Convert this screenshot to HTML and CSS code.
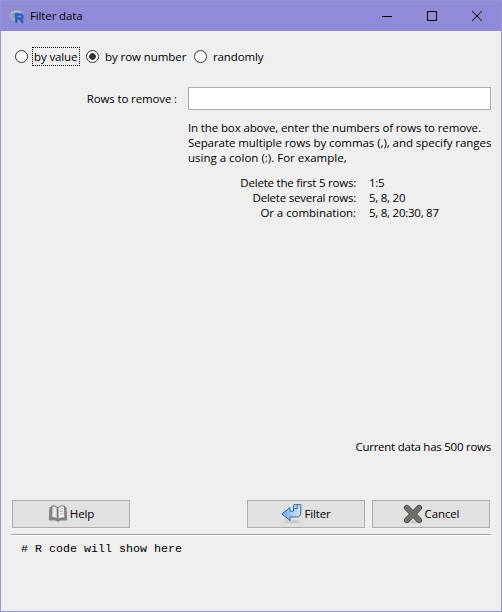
FILE: index.html
```html
<!DOCTYPE html>
<html lang="en">
<head>
<meta charset="utf-8">
<title>Filter data</title>
<link rel="stylesheet" href="styles.css">
</head>
<body>
<div class="window">
  <header class="titlebar">
    <svg class="logo" width="16" height="14" viewBox="0 0 16 14">
      <ellipse cx="7.7" cy="5.6" rx="6.3" ry="4.4" fill="none" stroke="#a5a8b4" stroke-width="2.6"/>
      <path d="M2 3.4Q7 -.4 12.5 3" fill="none" stroke="#c9cbd5" stroke-width="1"/>
      <path d="M7.3 12.7V4.4H11.2Q13.6 4.4 13.6 6.5T11.2 8.6H8M11 8.7L14 12.7" fill="none" stroke="#2464b8" stroke-width="2.5"/>
    </svg>
    <h1 class="title">Filter data</h1>
    <div class="controls">
      <svg width="10" height="10" viewBox="0 0 10 10"><path d="M0 5.5H10"/></svg>
      <svg width="10" height="10" viewBox="0 0 10 10"><path d="M.5 .5H9.5V9.5H.5Z"/></svg>
      <svg width="10" height="10" viewBox="0 0 10 10"><path d="M0 0L10 10M10 0L0 10"/></svg>
    </div>
  </header>
  <main class="content">
    <div class="radios">
      <span class="radio"></span><span class="label focused">by value</span>
      <span class="radio checked"></span><span class="label row-label">by row number</span>
      <span class="radio"></span><span class="label">randomly</span>
    </div>
    <div class="form">
      <label class="field-label" for="rows">Rows to remove :</label>
      <input class="field" id="rows" type="text">
      <div class="hint">
        <div>In the box above, enter the numbers of rows to remove.</div>
        <div class="hint-wide">Separate multiple rows by commas (,), and specify ranges</div>
        <div class="hint-last">using a colon (:). For example,</div>
      </div>
      <div class="examples">
        <span class="ex-name">Delete the first 5 rows:</span><span>1:5</span>
        <span class="ex-name">Delete several rows:</span><span>5, 8, 20</span>
        <span class="ex-name ex-last">Or a combination:</span><span>5, 8, 20:30, 87</span>
      </div>
    </div>
    <p class="status">Current data has 500 rows</p>
    <div class="buttons">
      <button class="button help">
        <svg width="20" height="20" viewBox="0 0 20 20">
          <path d="M2 3.5L1.2 16H8L10 17.5L12 16H18.8L18 3.5Z" fill="#858585" stroke="#858585"/>
          <path d="M3.5 2Q7 1 9.5 3.5V15.5Q7 13 3 14Z" fill="#c4c4c4" stroke="#777"/>
          <path d="M10 3.5Q13 1 16.5 2L17 14Q13 13 10 15.5Z" fill="#f3f3f3" stroke="#777"/>
          <path d="M6.5 3V13" stroke="#f8f8f8" stroke-width="2"/>
          <path d="M12 5.2L15 4.5M12 7.7L15 7M12 10.2L15.3 9.5" stroke="#aaa"/>
        </svg>
        <span>Help</span>
      </button>
      <button class="button filter">
        <svg width="21" height="20" viewBox="0 0 21 20">
          <defs><linearGradient id="blue" x2="1" y2="0"><stop stop-color="#6faae0"/><stop offset="1" stop-color="#d3e4f5"/></linearGradient></defs>
          <ellipse cx="11" cy="17.6" rx="8.5" ry="1.6" fill="#c9c9c9"/>
          <path d="M.8 10L9 3.5V7.2H12.5V1.5Q12.5 .6 13.5 .6H19.8V9Q19.8 13 15.5 13H9V16.5Z" fill="url(#blue)" stroke="#3269a5"/>
          <path d="M13 4.7H16.2V1" fill="none" stroke="#3269a5"/>
        </svg>
        <span>Filter</span>
      </button>
      <button class="button cancel">
        <svg width="20" height="20" viewBox="0 0 20 20">
          <ellipse cx="10" cy="17.8" rx="8" ry="1.4" fill="#c8c8c8"/>
          <g fill="none" stroke-linecap="round">
            <path d="M3.8 3.8L16.2 16.2M16.2 3.8L3.8 16.2" stroke="#464844" stroke-width="5.8"/>
            <path d="M3.8 3.8L16.2 16.2M16.2 3.8L3.8 16.2" stroke="#858783" stroke-width="4"/>
            <path d="M3.8 3.8L16.2 16.2M16.2 3.8L3.8 16.2" stroke="#6b6d69" stroke-width="2.6"/>
          </g>
        </svg>
        <span>Cancel</span>
      </button>
    </div>
    <div class="separator"></div>
    <code class="code"># R code will show here</code>
  </main>
</div>
</body>
</html>
```

FILE: styles.css
```css
* { box-sizing: border-box; }
body {
  margin: 0;
  font: 11.5px/15px "Open Sans", "Noto Sans", sans-serif;
  letter-spacing: -0.13px;
  color: #000;
}
.window {
  width: 502px;
  height: 612px;
  overflow: hidden;
  border: 1px solid #9793da;
  background: #efefef;
}
.titlebar {
  display: flex;
  align-items: center;
  height: 30px;
  padding: 0 19px 0 8px;
  background: #8f8bd8;
}
.logo { margin-top: 1px; }
.title {
  flex: 1;
  margin: -2px 0 0 5px;
  font-size: 11.5px;
  font-weight: 400;
}
.controls { display: flex; gap: 35px; margin-top: -1px; }
.controls svg { fill: none; stroke: #000; stroke-width: 1; }
.content { padding: 15px 10px 0 11px; }
.radios { display: flex; align-items: center; height: 20px; padding-left: 3px; }
.radio {
  width: 13px;
  height: 13px;
  margin-right: 6px;
  border: 1px solid #333;
  border-radius: 50%;
  background: #fff;
}
.radio.checked { background: radial-gradient(circle, #333 3px, #fff 3.7px); }
.label { white-space: nowrap; }
.focused {
  width: 48px;
  height: 19px;
  margin: 0 6px 0 -2px;
  padding: 1px;
  border: 1px dotted #000;
}
.row-label { width: 83px; margin-right: 6px; letter-spacing: -0.07px; }
.form {
  display: grid;
  grid-template-columns: 165px 303px;
  column-gap: 11px;
  margin-top: 21px;
}
.field-label { justify-self: end; align-self: center; letter-spacing: -0.13px; }
.field {
  width: 303px;
  height: 23px;
  padding: 0 4px;
  border: 1px solid #abadb3;
  background: #fff;
  font: inherit;
}
.hint { grid-column: 2; margin-top: 10px; white-space: nowrap; }
.hint-wide { letter-spacing: -0.06px; }
.hint-last { letter-spacing: 0; }
.examples {
  grid-column: 2;
  display: grid;
  grid-template-columns: 168px 1fr;
  column-gap: 13px;
  margin-top: 10px;
  letter-spacing: -0.25px;
}
.ex-name { text-align: right; letter-spacing: -0.22px; }
.ex-last { letter-spacing: -0.05px; }
.status { margin: 219px 0 0; text-align: right; letter-spacing: -0.25px; }
.buttons { display: flex; margin-top: 46px; padding-right: 1px; }
.button {
  display: flex;
  align-items: center;
  justify-content: center;
  gap: 2px;
  width: 118px;
  height: 28px;
  padding: 0;
  border: 1px solid #adadad;
  background: #e1e1e1;
  color: #000;
  font: inherit;
  letter-spacing: inherit;
}
.button span { margin-top: -2px; }
.filter { margin-left: auto; }
.cancel { margin-left: 7px; }
.separator {
  height: 2px;
  margin: 6px 0 0 -1px;
  border-top: 1px solid #a0a0a0;
  background: #fff;
}
.code {
  display: block;
  margin: 6px 0 0 9px;
  font: 11.67px/15px "Liberation Mono", monospace;
  letter-spacing: 0;
}
```
